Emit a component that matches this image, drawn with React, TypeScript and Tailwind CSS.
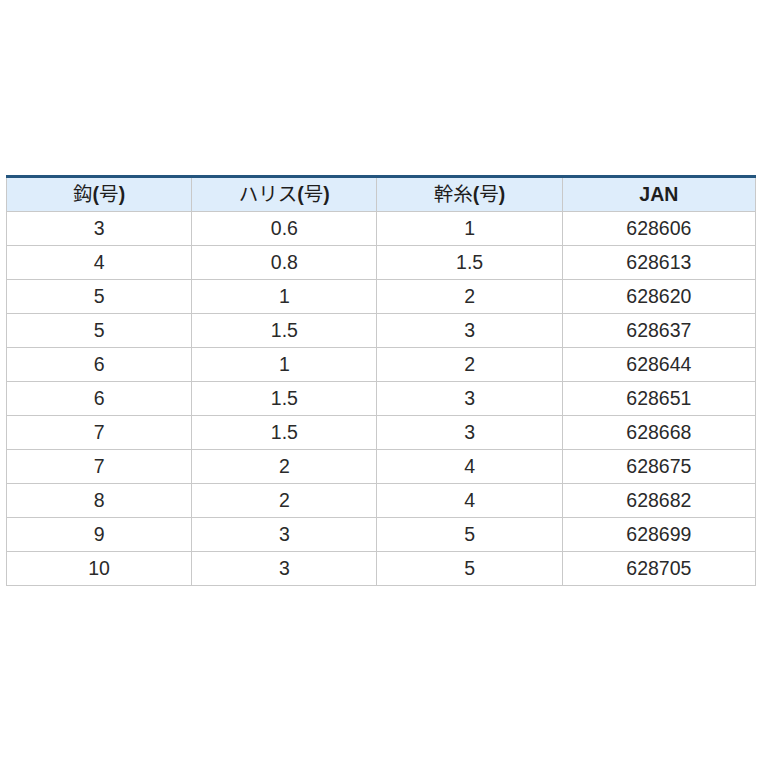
const rows = [
  ["3", "0.6", "1", "628606"],
  ["4", "0.8", "1.5", "628613"],
  ["5", "1", "2", "628620"],
  ["5", "1.5", "3", "628637"],
  ["6", "1", "2", "628644"],
  ["6", "1.5", "3", "628651"],
  ["7", "1.5", "3", "628668"],
  ["7", "2", "4", "628675"],
  ["8", "2", "4", "628682"],
  ["9", "3", "5", "628699"],
  ["10", "3", "5", "628705"],
]

const heads: [string, boolean][] = [
  ["鈎", true],
  ["ハリス", true],
  ["幹糸", true],
  ["JAN", false],
]

export default function App() {
  return (
    <div
      className="w-[760px] h-[760px] bg-white pt-[175px] pl-[6px]"
      style={{ fontFamily: '"Liberation Sans", Arial, "Noto Sans CJK JP", sans-serif' }}
    >
      <table className="w-[750px] border-collapse border-t-[3px] border-t-[#24557e] text-[19.5px] text-[#2a2a2a]">
        <thead>
          <tr className="h-[35px] bg-[#deedfb]">
            {heads.map(([h, jp], i) => (
              <th
                key={i}
                className={
                  "border border-[#c9c9c9] border-t-0 text-center font-bold text-[#1e1e1e] " +
                  (i === 3 ? "w-[193px]" : "w-[185px]")
                }
              >
                {jp ? (
                  <>
                    <span className="font-normal">{h}</span>
                    <span>(</span>
                    <span className="font-normal">号</span>
                    <span>)</span>
                  </>
                ) : (
                  h
                )}
              </th>
            ))}
          </tr>
        </thead>
        <tbody>
          {rows.map((r, i) => (
            <tr key={i} className="h-[34px]">
              {r.map((c, j) => (
                <td key={j} className="border border-[#c9c9c9] text-center">
                  {c}
                </td>
              ))}
            </tr>
          ))}
        </tbody>
      </table>
    </div>
  )
}
